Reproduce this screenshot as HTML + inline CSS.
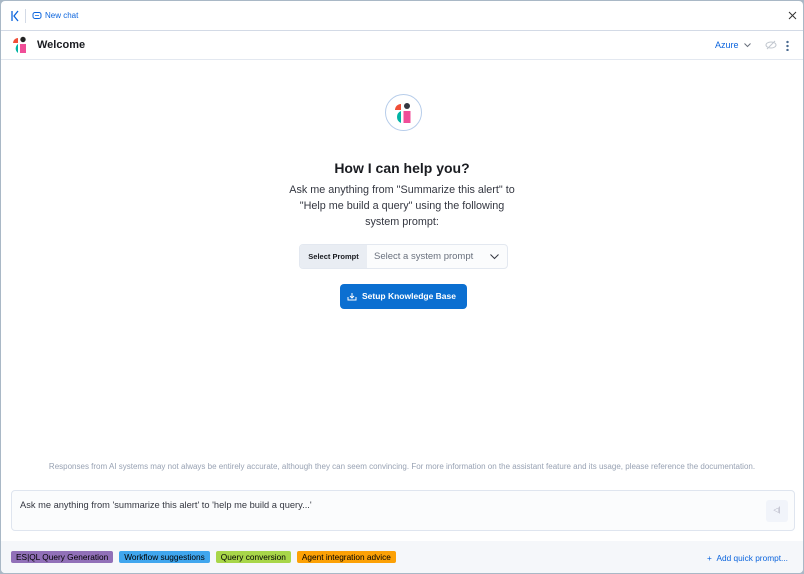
<!DOCTYPE html>
<html><head><style>
*{box-sizing:border-box;margin:0;padding:0}
body{width:804px;height:574px;overflow:hidden;font-family:"Liberation Sans",sans-serif;background:#a9b8c6;}
.f{position:absolute;left:1px;top:1px;width:802px;height:572px;background:#fff;border-radius:4px;overflow:hidden}
.abs{position:absolute}
.bar1{left:0;top:0;width:802px;height:30px;border-bottom:1px solid #d3dae6}
.bar2{left:0;top:30px;width:802px;height:29px;border-bottom:1px solid #e3e8f0}
.badge{display:block;height:12px;font-size:8.3px;line-height:12px;padding:0 5px;margin-right:6px;color:#000;border-radius:2px}
</style></head><body><div class="f">
<div class="abs bar1">
 <svg class="abs" style="left:9px;top:9px" width="10" height="12"><path d="M2 1v10M8 1L4 6l4 5" stroke="#0b64dd" stroke-width="1.3" fill="none"/></svg>
 <div class="abs" style="left:24px;top:8px;width:1px;height:14px;background:#d3dae6"></div>
 <svg class="abs" style="left:31px;top:10px" width="10" height="10"><rect x="1" y="1.5" width="8" height="6" rx="2" fill="none" stroke="#0b64dd" stroke-width="1"/><path d="M3 4.5h4" stroke="#0b64dd" stroke-width=".8"/></svg>
 <div class="abs" style="left:44px;top:10px;font-size:8px;color:#0b64dd">New chat</div>
 <svg class="abs" style="left:787px;top:10px" width="9" height="9"><path d="M1 1l7 7M8 1L1 8" stroke="#333" stroke-width="1"/></svg>
</div>
<div class="abs bar2">
 <svg class="abs" style="left:11px;top:5px" width="16" height="18"><path d="M1 7a5 5 0 0 1 5-5v5z" fill="#f04e37"/><circle cx="11" cy="3.5" r="2.7" fill="#222"/><path d="M6 17A5.5 5.5 0 0 1 6 8z" fill="#00b3a4"/><rect x="8" y="8" width="6" height="9" fill="#f04e98"/></svg>
 <div class="abs" style="left:36px;top:8px;font-size:11px;font-weight:bold;color:#1a1c21">Welcome</div>
 <div class="abs" style="left:714px;top:9px;font-size:9px;color:#0b64dd">Azure</div>
 <svg class="abs" style="left:743px;top:12px" width="7" height="5"><path d="M.5 .5L3.5 3.5 6.5 .5" stroke="#69707d" fill="none"/></svg>
 <svg class="abs" style="left:764px;top:8px" width="12" height="12"><ellipse cx="6" cy="6" rx="5" ry="3" fill="none" stroke="#c0c6ce"/><path d="M2 10L10 2" stroke="#c0c6ce"/></svg>
 <div class="abs" style="left:785px;top:9px;width:3px;height:11px;background:radial-gradient(circle,#4a6a90 1.2px,transparent 1.3px) 0 0/3px 4px"></div>
</div>
<div class="abs" style="left:384px;top:93px;width:37px;height:37px;border-radius:50%;border:1px solid #b7cdea"></div>
<svg class="abs" style="left:393px;top:101px" width="18" height="21"><path d="M1 8a6 6 0 0 1 6-6v6z" fill="#f04e37"/><circle cx="13" cy="4" r="3" fill="#343741"/><path d="M7 21A6.5 6.5 0 0 1 7 9z" fill="#00b3a4"/><rect x="9.5" y="9" width="7" height="12" fill="#f04e98"/></svg>
<div class="abs" style="left:0;top:159px;width:802px;text-align:center;font-size:14px;font-weight:bold;color:#1a1c21">How I can help you?</div>
<div class="abs" style="left:0;top:181px;width:802px;text-align:center;font-size:10.8px;line-height:16px;color:#343741">Ask me anything from "Summarize this alert" to<br>"Help me build a query" using the following<br>system prompt:</div>
<div class="abs" style="left:298px;top:243px;width:209px;height:25px;border:1px solid #e3e8f0;border-radius:4px;background:#fbfcfd;overflow:hidden">
 <div class="abs" style="left:0;top:0;width:67px;height:23px;background:#e9edf3;font-size:7.5px;font-weight:bold;line-height:23px;text-align:center;color:#1a1c21">Select Prompt</div>
 <div class="abs" style="left:74px;top:6px;font-size:9.5px;color:#69707d">Select a system prompt</div>
 <svg class="abs" style="left:190px;top:9px" width="9" height="6"><path d="M.5 .5L4.5 4.5 8.5 .5" stroke="#343741" fill="none"/></svg>
</div>
<div class="abs" style="left:339px;top:283px;width:127px;height:25px;background:#0b6fd1;border-radius:4px;color:#fff;font-size:8.5px;font-weight:bold;line-height:25px;padding-left:22px">Setup Knowledge Base</div>
<svg class="abs" style="left:346px;top:291px" width="10" height="9"><path d="M1 5v3h8V5M5 1v5M3 4l2 2 2-2" stroke="#fff" fill="none"/></svg>
<div class="abs" style="left:0;top:461px;width:802px;text-align:center;font-size:8px;color:#98a2b3;white-space:nowrap">Responses from AI systems may not always be entirely accurate, although they can seem convincing. For more information on the assistant feature and its usage, please reference the documentation.</div>
<div class="abs" style="left:10px;top:489px;width:784px;height:41px;border:1px solid #dfe5ef;border-radius:4px;background:#fbfcfd">
 <div class="abs" style="left:8px;top:9px;font-size:9.3px;color:#343741">Ask me anything from 'summarize this alert' to 'help me build a query...'</div>
 <div class="abs" style="left:754px;top:9px;width:22px;height:22px;background:#f1f4fa;border-radius:3px;font-size:7px;color:#aab;text-align:center;line-height:22px">◁|</div>
</div>
<div class="abs" style="left:0;top:540px;width:802px;height:32px;background:#f5f7fa">
 <div class="abs" style="left:10px;top:10px;display:flex;white-space:nowrap"><span class="badge" style="background:#9170b8">ES|QL Query Generation</span><span class="badge" style="background:#40a6ee">Workflow suggestions</span><span class="badge" style="background:#a8d649">Query conversion</span><span class="badge" style="background:#fca106">Agent integration advice</span></div>
 <div class="abs" style="left:706px;top:12px;font-size:8.3px;color:#0b64dd">+&nbsp;&nbsp;Add quick prompt...</div>
</div>
</div></body></html>
